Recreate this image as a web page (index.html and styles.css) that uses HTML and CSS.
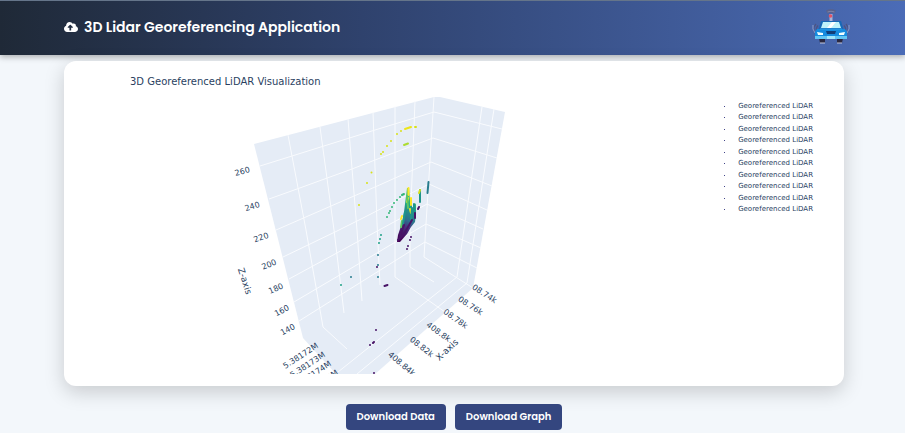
FILE: index.html
```html
<!DOCTYPE html>
<html lang="en">
<head>
<meta charset="utf-8">
<meta name="viewport" content="width=device-width, initial-scale=1">
<title>3D Lidar Georeferencing Application</title>
<link rel="stylesheet" href="styles.css">
</head>
<body>
<header class="topbar">
  <h1 class="brand">
    <svg class="brand-icon" viewBox="0 0 640 512" aria-hidden="true"><path fill="currentColor" fill-rule="evenodd" d="M537.600 226.600c4.100-10.700 6.400-22.400 6.400-34.600 0-53-43-96-96-96-19.700 0-38.100 6-53.300 16.200C367 64.200 315.300 32 256 32c-88.400 0-160 71.600-160 160 0 2.700.1 5.400.2 8.100C40.200 219.800 0 273.200 0 336c0 79.500 64.500 144 144 144h368c70.700 0 128-57.300 128-128 0-61.900-44-113.600-102.400-125.400zM393.400 288H328v112c0 8.800-7.200 16-16 16h-48c-8.800 0-16-7.200-16-16V288h-65.400c-14.300 0-21.400-17.200-11.300-27.300l105.400-105.400c6.200-6.200 16.400-6.200 22.600 0l105.400 105.400c10.100 10.100 2.900 27.300-11.300 27.300z"/></svg>
    <span>3D Lidar Georeferencing Application</span>
  </h1>
  <svg class="car-logo" viewBox="0 0 38 36" role="img" aria-label="Lidar car">
    <g fill="none" stroke="#4c5484" stroke-width="1.200">
      <path d="M4 15q-4 4.500-1 9M6 16.500q-3 3.500-.5 6M34 15q4 4.500 1 9M32 16.500q3 3.500.5 6"/>
    </g>
    <path d="M1 16q-1 4 2 8M37 16q1 4-2 8" fill="none" stroke="#9eafdc" stroke-width=".8"/>
    <path d="M14 1.500q5-2.500 10 0l-1.500 3q-3.500-1.500-7 0z" fill="#59618c"/>
    <path d="M15.500 3q3.500-1.500 7 0" fill="none" stroke="#8b93b8" stroke-width=".7"/>
    <path d="M17.500 5h3v7h-3z" fill="#a9b4d8"/><circle cx="18.500" cy="7" r="1.800" fill="#e25468"/>
    <path d="M7 29h6v5H8zM25 29h6l-1 5h-5z" fill="#292841"/>
    <path d="M9 12h20l3 10H6z" fill="#1769b7"/>
    <path d="M11 13h16l2 6H9z" fill="#bff3fb"/><path d="m20 13-5 6h4l5-6z" fill="#fff"/>
    <path d="M5 20h28l2 3v7H3v-7z" fill="#168bdf"/>
    <path d="M8 20h22" stroke="#2b9fe6"/>
    <path d="M14 22h10l-1 3h-8z" fill="#123d78"/>
    <path d="M5 23l6 1v2H6zM33 23l-6 1v2h5z" fill="#f3ffff"/>
    <path d="M3 27h32v3H3z" fill="#61c5f4"/><path d="M15 27h8v3h-8z" fill="#a2e5fa"/>
    <path d="M8 34h5M25 34h5" stroke="#c5cae0"/>
  </svg>
</header>
<main class="page">
  <section class="card">
    <h2 class="plot-title">3D Georeferenced LiDAR Visualization</h2>
    <div class="plot-row">
      <svg class="plot" viewBox="224 94 290 280" role="img" aria-label="3D scatter plot">
        <path class="wall" d="M254 144 434 97h6l65 15-32 176-98 86h-39l-33-36z"/>
        <g class="grid">
          <path d="M288 135l18 95 17 97 24 22M320 127l14 103 10 83M348 119l9 111 5 71M373 112l4 111 3 62M395 106v171l50 35M415 101l-5 129v37l24 15M434 97l-8 127-2 33 49 31M482 107l-25 170-119 95M494 109l-27 174-110 91"/>
          <path d="M260 166l32-10 83-26 59-18 68 17M269 199l28-10 55-20 23-9 58-22 64 20M276 230l78-34 21-9 56-25 61 24M283 257l52-25 30-15 64-33 58 26M289 279l138-75 56 25M294 302l132-78 55 24M299 321l126-79 52 26"/>
        </g>
        <g class="labels">
          <text transform="translate(243 174) rotate(-15)">260</text>
          <text transform="translate(253 209) rotate(-17)">240</text>
          <text transform="translate(262 240) rotate(-20)">220</text>
          <text transform="translate(270 267) rotate(-22)">200</text>
          <text transform="translate(277 291) rotate(-24)">180</text>
          <text transform="translate(283 313) rotate(-27)">160</text>
          <text transform="translate(289 332) rotate(-28)">140</text>
          <text transform="translate(302 358) rotate(-33)">5.38172M</text>
          <text transform="translate(309 367) rotate(-33)">5.38173M</text>
          <text transform="translate(315 376) rotate(-33)">5.38174M</text>
          <text transform="translate(322 385) rotate(-33)">5.38175M</text>
          <text transform="translate(483 296) rotate(33)">08.74k</text>
          <text transform="translate(469 308) rotate(33)">08.76k</text>
          <text transform="translate(454 321) rotate(35)">08.78k</text>
          <text transform="translate(437 334) rotate(36)">408.8k</text>
          <text transform="translate(420 349) rotate(38)">08.82k</text>
          <text transform="translate(400 366) rotate(40)">408.84k</text>
          <text class="axis" transform="translate(242 282) rotate(72)">Z-axis</text>
          <text class="axis" transform="translate(449 352) rotate(-43)">X-axis</text>
        </g>
        <g class="points">
          <path stroke="#d8e219" d="M359 205h0M371.500 172.500h0M367 183h0M381 154h0M383 152h0M387 146h0M391 141h0M397 134h0M401 131h0M415 127h1"/>
          <path stroke="#ece51b" d="M405 129l3-1M408 128l3-1"/>
          <path stroke="#addc30" d="M404 145l4-1.500"/>
          <path stroke="#35b779" d="M387 217h0M389 213h0M390 211h0M392 207h0M394 203h0M397 200h0M400 197h0M402 195l2-1"/>
          <path stroke="#1fa187" d="M341 285h0M381 235h0M380 239h0M379 243h0"/>
          <path stroke="#287d8e" d="M351 277h0M378 255h0M378 265h0M378 277h0"/>
          <path stroke="#481467" d="M377 267h0M384.500 286l3-1M376 330h0M370 345h0M373 343l1-1M374 373h0M411 237h0M408 246h0M410 240h0M407 249h0"/>
        </g>
        <defs><linearGradient id="depth" x1="0.600" y1="0" x2="0.400" y2="1"><stop offset="0" stop-color="#73d055"/><stop offset=".3" stop-color="#20a386"/><stop offset=".58" stop-color="#2d708e"/><stop offset=".72" stop-color="#46327e"/><stop offset="1" stop-color="#440154"/></linearGradient></defs>
        <path fill="url(#depth)" d="M407 188h2l1 12 2 2v7l4-6v11l-1 8-4 5-4 7-7 8h-3l1-7 4-12 2-11z"/>
        <g class="points">
          <path stroke="#fde725" d="M408.500 188v7M408 198l-1 4M411 198v7M402 216l-1 3M410 209l1 4"/>
          <path stroke="#5ec962" d="M407 196l1 12M402 221l-1 6"/>
          <path stroke="#1f958b" d="M412 208l-1 11M405 212l-2 12M420 190v12M414 204v8"/>
          <path stroke="#d8e219" d="M420 190l-1 3"/>
          <path stroke="#287d8e" d="M428.500 182l-1 11"/>
          <path stroke="#481467" d="M419 207l-1 2M415 213v5M412 220l-8 14-6 6M404 225l-4 11"/>
        </g>
      </svg>
      <ul class="legend">
        <li>Georeferenced LiDAR</li><li>Georeferenced LiDAR</li><li>Georeferenced LiDAR</li><li>Georeferenced LiDAR</li><li>Georeferenced LiDAR</li><li>Georeferenced LiDAR</li><li>Georeferenced LiDAR</li><li>Georeferenced LiDAR</li><li>Georeferenced LiDAR</li><li>Georeferenced LiDAR</li>
      </ul>
    </div>
  </section>
  <div class="actions">
    <button type="button">Download Data</button>
    <button type="button">Download Graph</button>
  </div>
</main>
</body>
</html>
```

FILE: styles.css
```css
* { box-sizing: border-box; }
body {
  margin: 0;
  background: #f3f7fb;
  font-family: Poppins, Inter, "Liberation Sans", sans-serif;
}
.topbar {
  display: flex;
  align-items: center;
  justify-content: space-between;
  padding: 8px 55px 10px 64px;
  border-top: 1px solid #65758a;
  background: linear-gradient(90deg, #1f2937, #2f426d 40%, #4b6cb7);
  box-shadow: 0 2px 6px rgba(0, 0, 0, .3);
}
.brand {
  display: flex;
  align-items: center;
  gap: 6px;
  margin: 0;
  color: #fff;
  font-size: 14px;
  line-height: 20px;
  font-weight: 600;
}
.brand-icon { width: 14px; height: 12px; }
.car-logo { width: 38px; height: 36px; }
.page { padding: 6px 61px 0 64px; }
.card {
  padding: 13px 31px 12px 64px;
  border-radius: 12px;
  background: #fff;
  box-shadow: 0 6px 20px rgba(0, 0, 0, .18);
}
.plot-title {
  margin: 0 0 4px 2px;
  color: #2a3f5f;
  font: 400 10px/16px "DejaVu Sans", sans-serif;
}
.plot-row {
  display: flex;
  justify-content: space-between;
  align-items: flex-start;
  padding-left: 96px;
}
.plot { width: 290px; height: 280px; overflow: hidden; }
.wall { fill: #e5ecf6; }
.grid { fill: none; stroke: #f9fbfe; stroke-width: 1; }
.labels {
  fill: #2a3f5f;
  font: 8px "DejaVu Sans", sans-serif;
  text-anchor: middle;
}
.axis { font-size: 9px; }
.points { fill: none; stroke-width: 2; stroke-linecap: round; }
.legend {
  display: flex;
  flex-direction: column;
  justify-content: space-between;
  height: 114px;
  margin: 7px 0 0;
  padding: 0;
  list-style: none;
  color: #2a3f5f;
  font: 7px/11px "DejaVu Sans", sans-serif;
}
.legend li { display: flex; align-items: center; gap: 13px; }
.legend li::before {
  content: "";
  width: 1px;
  height: 1px;
  background: #414487;
}
.actions {
  display: flex;
  justify-content: center;
  gap: 9px;
  padding: 18px 0 2px;
}
.actions button {
  padding: 5px 11px;
  border: 0;
  border-radius: 4px;
  background: #34467f;
  color: #fff;
  font: 600 10px/16px Poppins, Inter, "Liberation Sans", sans-serif;
}
```
